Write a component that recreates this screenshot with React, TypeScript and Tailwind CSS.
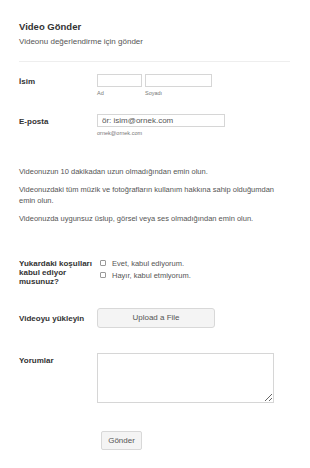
export default function App() {
  return (
    <div className="min-h-[468px] w-[310px] bg-white px-[19px] text-[#333] [font-family:'Liberation_Sans',Arial,sans-serif]">
      <div className="pt-[20px]">
        <h1 className="text-[9.5px] font-bold leading-[14px] text-[#333]">Video Gönder</h1>
        <p className="mt-[2px] text-[8px] leading-[11px] text-[#555]">Videonu değerlendirme için gönder</p>
      </div>
      <div className="mt-[14px] h-px w-[271px] bg-[#eeeeee]" />

      <div className="mt-[12px] flex">
        <label className="w-[78px] pt-[2px] text-[8px] font-bold">İsim</label>
        <div className="flex gap-[3px]">
          <div>
            <input className="block h-[13px] w-[45px] border border-[#d6d6d6] bg-white" />
            <span className="mt-[2px] block text-[5.5px] text-[#777]">Ad</span>
          </div>
          <div>
            <input className="block h-[13px] w-[67px] border border-[#d6d6d6] bg-white" />
            <span className="mt-[2px] block text-[5.5px] text-[#777]">Soyadı</span>
          </div>
        </div>
      </div>

      <div className="mt-[17px] flex">
        <label className="w-[78px] pt-[2px] text-[8px] font-bold">E-posta</label>
        <div>
          <input
            className="block h-[13px] w-[128px] border border-[#d6d6d6] bg-white px-[4px] text-[8px] text-[#555] placeholder:text-[#555]"
            placeholder="ör: isim@ornek.com"
          />
          <span className="mt-[2px] block text-[5.5px] text-[#777]">ornek@ornek.com</span>
        </div>
      </div>

      <div className="mt-[28px] space-y-[7px] text-[7.5px] leading-[11px] text-[#555]">
        <p>Videonuzun 10 dakikadan uzun olmadığından emin olun.</p>
        <p>
          Videonuzdaki tüm müzik ve fotoğrafların kullanım hakkına sahip olduğumdan
          <br />
          emin olun.
        </p>
        <p>Videonuzda uygunsuz üslup, görsel veya ses olmadığından emin olun.</p>
      </div>

      <div className="mt-[35px] flex">
        <label className="w-[78px] text-[8px] font-bold leading-[9px]">
          Yukardaki koşulları kabul ediyor musunuz?
        </label>
        <div className="space-y-[3px] pl-[3px]">
          <label className="flex items-center gap-[6px] text-[7.5px] leading-[9px] text-[#555]">
            <span className="h-[6px] w-[6px] rounded-[1px] border border-[#999]" />
            Evet, kabul ediyorum.
          </label>
          <label className="flex items-center gap-[6px] text-[7.5px] leading-[9px] text-[#555]">
            <span className="h-[6px] w-[6px] rounded-[1px] border border-[#999]" />
            Hayır, kabul etmiyorum.
          </label>
        </div>
      </div>

      <div className="mt-[22px] flex">
        <label className="w-[78px] pt-[5px] text-[8px] font-bold">Videoyu yükleyin</label>
        <button className="h-[20px] w-[118px] rounded-[3px] border border-[#d8d8d8] bg-[#f4f4f4] text-[8px] text-[#555]">
          Upload a File
        </button>
      </div>

      <div className="mt-[25px] flex">
        <label className="w-[78px] pt-[2px] text-[8px] font-bold">Yorumlar</label>
        <textarea className="h-[50px] w-[177px] resize-y border border-[#d6d6d6] bg-white" />
      </div>

      <div className="mt-[23px] pl-[82px]">
        <button className="h-[19px] w-[41px] rounded-[2px] border border-[#d8d8d8] bg-[#f4f4f4] text-[8px] text-[#555]">
          Gönder
        </button>
      </div>
    </div>
  );
}
